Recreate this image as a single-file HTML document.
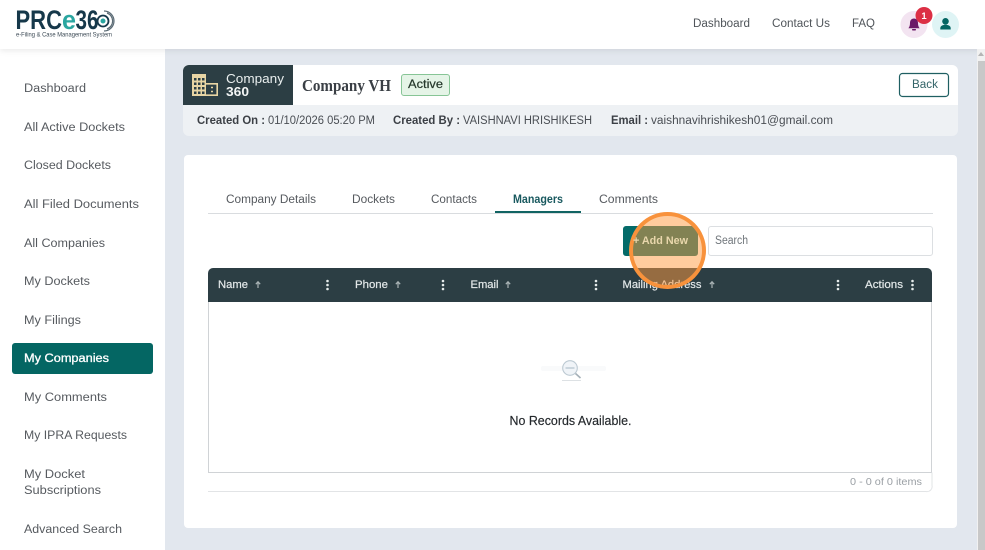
<!DOCTYPE html>
<html lang="en">
<head>
<meta charset="utf-8">
<title>PRCe360 - My Companies</title>
<style>
html,body{margin:0;padding:0;width:985px;height:550px;overflow:hidden;background:#e2e7ee}
svg{display:block}
text{font-family:"Liberation Sans",Arial,sans-serif}
.n{font-size:11.5px;fill:#565a5f}
.h{font-size:11.5px;fill:#50555a}
.b{font-weight:400;stroke-width:.3px}
.th{font-size:11px;fill:#e3e8e9;stroke:#e3e8e9;stroke-width:.2px}
</style>
</head>
<body>
<svg width="985" height="550" viewBox="0 0 985 550" xmlns="http://www.w3.org/2000/svg">
<defs>
<filter id="sh" x="-5%" y="-20%" width="110%" height="160%"><feDropShadow dx="0" dy="2" stdDeviation="3" flood-color="#000" flood-opacity=".08"/></filter>
<clipPath id="topc"><path d="M183 105V71a6 6 0 0 1 6-6H952a6 6 0 0 1 6 6V105Z"/></clipPath>
</defs>
<rect width="985" height="550" fill="#e2e7ee"/>

<!-- sidebar -->
<rect x="0" y="49" width="165" height="501" fill="#fff"/>
<rect x="12" y="343" width="141" height="31" rx="3" fill="#046663"/>
<g class="nav">
<text class="n" x="24" y="92" textLength="62" lengthAdjust="spacingAndGlyphs">Dashboard</text>
<text class="n" x="24" y="131" textLength="101" lengthAdjust="spacingAndGlyphs">All Active Dockets</text>
<text class="n" x="24" y="169" textLength="87" lengthAdjust="spacingAndGlyphs">Closed Dockets</text>
<text class="n" x="24" y="208" textLength="115" lengthAdjust="spacingAndGlyphs">All Filed Documents</text>
<text class="n" x="24" y="247" textLength="81" lengthAdjust="spacingAndGlyphs">All Companies</text>
<text class="n" x="24" y="285" textLength="66" lengthAdjust="spacingAndGlyphs">My Dockets</text>
<text class="n" x="24" y="324" textLength="57" lengthAdjust="spacingAndGlyphs">My Filings</text>
<text class="n b" x="24" y="362" textLength="85" lengthAdjust="spacingAndGlyphs" style="fill:#fff;stroke:#fff">My Companies</text>
<text class="n" x="24" y="401" textLength="83" lengthAdjust="spacingAndGlyphs">My Comments</text>
<text class="n" x="24" y="439" textLength="103" lengthAdjust="spacingAndGlyphs">My IPRA Requests</text>
<text class="n" x="24" y="478" textLength="61" lengthAdjust="spacingAndGlyphs">My Docket</text>
<text class="n" x="24" y="494" textLength="77" lengthAdjust="spacingAndGlyphs">Subscriptions</text>
<text class="n" x="24" y="533" textLength="98" lengthAdjust="spacingAndGlyphs">Advanced Search</text>
</g>

<!-- header -->
<rect x="0" y="0" width="985" height="49" fill="#fff" filter="url(#sh)"/>
<text x="15.500" y="29" font-size="27" font-weight="700" fill="#16384a" textLength="46.500" lengthAdjust="spacingAndGlyphs">PRC</text>
<text x="62" y="29" font-size="27" font-weight="700" fill="#2aa6a0" textLength="14" lengthAdjust="spacingAndGlyphs">e</text>
<text x="75.500" y="29" font-size="27" font-weight="700" fill="#16384a" textLength="23" lengthAdjust="spacingAndGlyphs">36</text>
<circle cx="103" cy="21" r="5.500" fill="none" stroke="#16384a" stroke-width="1.800"/>
<circle cx="103" cy="21" r="2.500" fill="#2aa6a0"/>
<path d="M104 11a10 10 0 0 1 0 20M107 13a8.500 8.500 0 0 1 0 16" fill="none" stroke="#5b6b75" stroke-width="1.200"/>
<text x="16" y="36.500" font-size="6.500" fill="#3c4a55" textLength="96" lengthAdjust="spacingAndGlyphs">e-Filing &amp; Case Management System</text>

<text class="h" x="693" y="27" textLength="57" lengthAdjust="spacingAndGlyphs">Dashboard</text>
<text class="h" x="772" y="27" textLength="58" lengthAdjust="spacingAndGlyphs">Contact Us</text>
<text class="h" x="852" y="27" textLength="23" lengthAdjust="spacingAndGlyphs">FAQ</text>

<circle cx="914" cy="24.500" r="13.500" fill="#f3e4f1"/>
<path d="M914 18.500c-2.700 0-4 2-4 4.500 0 2.600-.6 4-1.600 5.200h11.200c-1-1.200-1.600-2.600-1.600-5.200 0-2.500-1.300-4.500-4-4.500Z" fill="#6b1a68"/>
<rect x="912" y="29" width="4" height="1.500" rx=".7" fill="#6b1a68"/>
<circle cx="924" cy="15.500" r="8.500" fill="#dc2f45"/>
<text x="924" y="19" font-size="9.500" font-weight="700" fill="#fff" text-anchor="middle">1</text>
<circle cx="945.500" cy="24.500" r="13.500" fill="#dff4f5"/>
<circle cx="945.500" cy="21.300" r="3.300" fill="#046663"/>
<path d="M940.300 29.500v-1.300c0-2.300 2.500-3.400 5.200-3.400s5.200 1.100 5.200 3.400v1.300Z" fill="#046663"/>

<!-- scrollbar -->
<rect x="977" y="49" width="8" height="501" fill="#f1f1f1"/>
<path d="M981 52l3 4h-6Z" fill="#b5b5b5"/>
<rect x="978" y="61" width="7" height="489" fill="#c8c8c8"/>

<!-- company card -->
<rect x="183" y="65" width="775" height="71" rx="6" fill="#eef1f4"/>
<g clip-path="url(#topc)">
<rect x="183" y="65" width="775" height="40" fill="#fff"/>
<rect x="183" y="65" width="110" height="40" fill="#2c3e44"/>
</g>
<rect x="192" y="74" width="14" height="22" fill="#e8d5a4"/>
<g fill="#2c3e44">
<rect x="194" y="78" width="2.500" height="2.500"/><rect x="198" y="78" width="2.500" height="2.500"/><rect x="202" y="78" width="2.500" height="2.500"/>
<rect x="194" y="82.500" width="2.500" height="2.500"/><rect x="198" y="82.500" width="2.500" height="2.500"/><rect x="202" y="82.500" width="2.500" height="2.500"/>
<rect x="194" y="87" width="2.500" height="2.500"/><rect x="198" y="87" width="2.500" height="2.500"/><rect x="202" y="87" width="2.500" height="2.500"/>
<rect x="194" y="91.500" width="2.500" height="2.500"/><rect x="198" y="91.500" width="2.500" height="2.500"/><rect x="202" y="91.500" width="2.500" height="2.500"/>
</g>
<path d="M206 83.800h11.200v11.400H206" fill="none" stroke="#e8d5a4" stroke-width="1.600"/>
<path d="M211 87.500h2M211 91.500h2" fill="none" stroke="#e8d5a4" stroke-width="1.600"/>
<text x="226" y="83" font-size="13" fill="#e9eeee" textLength="58" lengthAdjust="spacingAndGlyphs">Company</text>
<text x="226" y="96" font-size="12.500" font-weight="700" fill="#f3f5f5" textLength="23" lengthAdjust="spacingAndGlyphs">360</text>
<text x="302" y="91" font-size="16.500" font-weight="700" fill="#3a3f45" textLength="89" lengthAdjust="spacingAndGlyphs" style="font-family:'Liberation Serif',serif">Company VH</text>
<rect x="401.500" y="74.500" width="48" height="21" rx="2.500" fill="#e5f4e7" stroke="#87c596"/>
<text x="408" y="88" font-size="11.500" fill="#26382c" stroke="#26382c" stroke-width=".2" textLength="35" lengthAdjust="spacingAndGlyphs">Active</text>
<rect x="899.500" y="73.500" width="49" height="23" rx="3" fill="#fff" stroke="#1f5f62" stroke-width="1.200"/>
<text x="912" y="88" font-size="11.500" fill="#336468" textLength="26" lengthAdjust="spacingAndGlyphs">Back</text>

<text x="197" y="124" font-size="11.500" font-weight="700" fill="#3c4046" textLength="68" lengthAdjust="spacingAndGlyphs">Created On :</text>
<text x="268" y="124" font-size="11.500" fill="#4a4e54" textLength="107" lengthAdjust="spacingAndGlyphs">01/10/2026 05:20 PM</text>
<text x="393" y="124" font-size="11.500" font-weight="700" fill="#3c4046" textLength="67" lengthAdjust="spacingAndGlyphs">Created By :</text>
<text x="463" y="124" font-size="11.500" fill="#4a4e54" textLength="129" lengthAdjust="spacingAndGlyphs">VAISHNAVI HRISHIKESH</text>
<text x="611" y="124" font-size="11.500" font-weight="700" fill="#3c4046" textLength="37" lengthAdjust="spacingAndGlyphs">Email :</text>
<text x="651" y="124" font-size="11.500" fill="#4a4e54" textLength="182" lengthAdjust="spacingAndGlyphs">vaishnavihrishikesh01@gmail.com</text>

<!-- main card -->
<rect x="184" y="155" width="773" height="373" rx="4" fill="#fff"/>

<!-- tabs -->
<rect x="208" y="213" width="725" height="1" fill="#d9dcdf"/>
<text class="n" x="226" y="203" textLength="90" lengthAdjust="spacingAndGlyphs">Company Details</text>
<text class="n" x="352" y="203" textLength="43" lengthAdjust="spacingAndGlyphs">Dockets</text>
<text class="n" x="431" y="203" textLength="46" lengthAdjust="spacingAndGlyphs">Contacts</text>
<text class="n" x="513" y="203" textLength="50" lengthAdjust="spacingAndGlyphs" font-weight="700" style="fill:#19595f;font-weight:700">Managers</text>
<text class="n" x="599" y="203" textLength="59" lengthAdjust="spacingAndGlyphs">Comments</text>
<rect x="495" y="211" width="86" height="2" fill="#116463"/>

<!-- add new + search -->
<rect x="623" y="226" width="75" height="30" rx="3" fill="#046b69"/>
<rect x="708.500" y="226.500" width="224" height="29" rx="2.500" fill="#fff" stroke="#dcdfe2"/>
<text x="715" y="244" font-size="11.500" fill="#6f757a" textLength="33" lengthAdjust="spacingAndGlyphs">Search</text>

<!-- table -->
<path d="M208.500 302V472.500H931.500V302" fill="#fff" stroke="#d0d3d6"/>
<path d="M208 491.500H926a5 5 0 0 0 6-6V472.500" fill="none" stroke="#e2e4e6"/>
<path d="M208 302V273a5 5 0 0 1 5-5H927a5 5 0 0 1 5 5V302Z" fill="#2c3e44"/>
<text class="th" x="218" y="288" textLength="30" lengthAdjust="spacingAndGlyphs">Name</text>
<text class="th" x="355" y="288" textLength="33" lengthAdjust="spacingAndGlyphs">Phone</text>
<text class="th" x="470.500" y="288" textLength="28" lengthAdjust="spacingAndGlyphs">Email</text>
<text class="th" x="622.500" y="288" textLength="79" lengthAdjust="spacingAndGlyphs">Mailing Address</text>
<text class="th" x="865" y="288" textLength="38" lengthAdjust="spacingAndGlyphs">Actions</text>
<g fill="none" stroke="#aab4b6" stroke-width="1.200">
<path d="M258 288v-6M255.800 284.200l2.200-2.400 2.200 2.400"/>
<path d="M398 288v-6M395.800 284.200l2.200-2.400 2.200 2.400"/>
<path d="M508 288v-6M505.800 284.200l2.200-2.400 2.200 2.400"/>
<path d="M712 288v-6M709.800 284.200l2.200-2.400 2.200 2.400"/>
</g>
<g fill="#e6ecec">
<circle cx="327.500" cy="281" r="1.300"/><circle cx="327.500" cy="285" r="1.300"/><circle cx="327.500" cy="289" r="1.300"/>
<circle cx="443" cy="281" r="1.300"/><circle cx="443" cy="285" r="1.300"/><circle cx="443" cy="289" r="1.300"/>
<circle cx="596" cy="281" r="1.300"/><circle cx="596" cy="285" r="1.300"/><circle cx="596" cy="289" r="1.300"/>
<circle cx="838" cy="281" r="1.300"/><circle cx="838" cy="285" r="1.300"/><circle cx="838" cy="289" r="1.300"/>
<circle cx="912.500" cy="281" r="1.300"/><circle cx="912.500" cy="285" r="1.300"/><circle cx="912.500" cy="289" r="1.300"/>
</g>

<!-- empty state -->
<rect x="541" y="366" width="65" height="5" rx="2" fill="#f9fafb"/>
<circle cx="570" cy="368" r="7.300" fill="#f0f4f8" stroke="#bcc9d2" stroke-width="1.100"/>
<path d="M565.500 368h9" stroke="#cbd6de" stroke-width="2"/>
<path d="M575.500 373.500l5 4.500" stroke="#a5b0b8" stroke-width="1.600"/>
<path d="M562 380.500h19" stroke="#dde1e4" stroke-width="1"/>
<text x="509.500" y="425" font-size="12.500" fill="#24282c" stroke="#24282c" stroke-width=".15" textLength="122" lengthAdjust="spacingAndGlyphs">No Records Available.</text>

<text x="850" y="485" font-size="10.500" fill="#9a9fa4" textLength="72" lengthAdjust="spacingAndGlyphs">0 - 0 of 0 items</text>

<!-- highlight -->
<circle cx="667.500" cy="250.500" r="36.500" fill="#ff9a3d" fill-opacity=".5" stroke="#f8923c" stroke-width="4"/>
<text x="633" y="244" font-size="11" font-weight="700" fill="#e9d7ac" textLength="55" lengthAdjust="spacingAndGlyphs">+ Add New</text>
</svg>
</body>
</html>
